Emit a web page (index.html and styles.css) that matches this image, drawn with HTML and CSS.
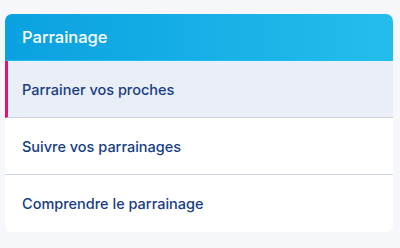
FILE: index.html
```html
<!DOCTYPE html>
<html lang="fr">
<head>
<meta charset="utf-8">
<title>Parrainage</title>
<link rel="stylesheet" href="styles.css">
</head>
<body>
<nav class="card">
  <div class="card-header">Parrainage</div>
  <ul class="menu">
    <li class="menu-item active">Parrainer vos proches</li>
    <li class="menu-item">Suivre vos parrainages</li>
    <li class="menu-item">Comprendre le parrainage</li>
  </ul>
</nav>
</body>
</html>
```

FILE: styles.css
```css
html, body {
  margin: 0;
  padding: 0;
}
body {
  background: #f6f7fb;
  padding: 14px 7px 0 5px;
  font-family: "Inter", "Liberation Sans", sans-serif;
}
.card {
  width: 388px;
  background: #ffffff;
  border-radius: 7px;
  overflow: hidden;
}
.card-header {
  height: 47px;
  box-sizing: border-box;
  padding: 0 17px 1px;
  display: flex;
  align-items: center;
  color: #ffffff;
  font-size: 16.5px;
  font-weight: 450;
  background: linear-gradient(90deg, #0aa1e0 0%, #24bdeb 100%);
  border-bottom: 1px solid #17bff2;
}
.menu {
  list-style: none;
  margin: 0;
  padding: 0;
}
.menu-item {
  height: 57px;
  box-sizing: border-box;
  padding: 0 17px;
  display: flex;
  align-items: center;
  color: #163d84;
  font-size: 14.5px;
  font-weight: 450;
  border-bottom: 1px solid #d0d6e1;
}
.menu-item:last-child {
  border-bottom: none;
}
.menu-item.active {
  background: #eaeef7;
  border-left: 3px solid #e8106a;
  padding-left: 14px;
}
```
